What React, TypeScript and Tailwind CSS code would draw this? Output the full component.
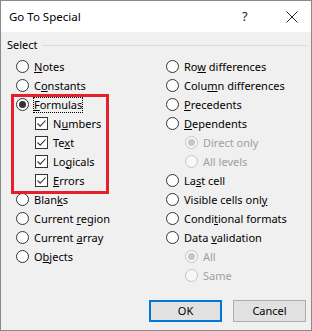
import React from "react";

type Item = {
  label: React.ReactNode;
  kind: "radio" | "check";
  checked?: boolean;
  disabled?: boolean;
  indent?: boolean;
  focus?: boolean;
};

function Radio({ checked, disabled }: { checked?: boolean; disabled?: boolean }) {
  return (
    <span
      className={`flex h-[13px] w-[13px] shrink-0 items-center justify-center rounded-full border ${
        disabled ? "border-[#c4c4c4] bg-[#f7f7f7]" : "border-[#333333] bg-white"
      }`}
    >
      {checked && (
        <span className={`h-[7px] w-[7px] rounded-full ${disabled ? "bg-[#c6c6c6]" : "bg-[#333333]"}`} />
      )}
    </span>
  );
}

function Check({ checked }: { checked?: boolean }) {
  return (
    <span className="flex h-[13px] w-[13px] shrink-0 items-center justify-center border border-[#333333] bg-white">
      {checked && (
        <svg width="11" height="11" viewBox="0 0 11 11">
          <path d="M1.5 5.5 L4.2 8.2 L9.5 2.5" fill="none" stroke="#333333" strokeWidth="1.1" />
        </svg>
      )}
    </span>
  );
}

function Row({ item }: { item: Item }) {
  return (
    <div className={`flex h-[19px] items-center ${item.indent ? "pl-[19px]" : ""}`}>
      {item.kind === "radio" ? <Radio checked={item.checked} disabled={item.disabled} /> : <Check checked={item.checked} />}
      <span
        className={`ml-[4px] leading-[14px] ${item.disabled ? "text-[#a0a0a0]" : "text-black"} ${
          item.focus ? "border border-dotted border-black px-[0px]" : "px-[1px]"
        }`}
      >
        {item.label}
      </span>
    </div>
  );
}

const left: Item[] = [
  { kind: "radio", label: <><u>N</u>otes</> },
  { kind: "radio", label: <>C<u>o</u>nstants</> },
  { kind: "radio", checked: true, focus: true, label: <><u>F</u>ormulas</> },
  { kind: "check", checked: true, indent: true, label: <>N<u>u</u>mbers</> },
  { kind: "check", checked: true, indent: true, label: <>Te<u>x</u>t</> },
  { kind: "check", checked: true, indent: true, label: <>Lo<u>g</u>icals</> },
  { kind: "check", checked: true, indent: true, label: <><u>E</u>rrors</> },
  { kind: "radio", label: <>Blan<u>k</u>s</> },
  { kind: "radio", label: <>Current <u>r</u>egion</> },
  { kind: "radio", label: <>Current <u>a</u>rray</> },
  { kind: "radio", label: <>O<u>b</u>jects</> },
];

const right: Item[] = [
  { kind: "radio", label: <>Ro<u>w</u> differences</> },
  { kind: "radio", label: <>Colu<u>m</u>n differences</> },
  { kind: "radio", label: <><u>P</u>recedents</> },
  { kind: "radio", label: <><u>D</u>ependents</> },
  { kind: "radio", disabled: true, checked: true, indent: true, label: "Direct only" },
  { kind: "radio", disabled: true, indent: true, label: "All levels" },
  { kind: "radio", label: <>La<u>s</u>t cell</> },
  { kind: "radio", label: <>Visible cells onl<u>y</u></> },
  { kind: "radio", label: <>Condi<u>t</u>ional formats</> },
  { kind: "radio", label: <>Data <u>v</u>alidation</> },
  { kind: "radio", disabled: true, checked: true, indent: true, label: "All" },
  { kind: "radio", disabled: true, indent: true, label: "Same" },
];

export default function App() {
  return (
    <div className="relative flex h-[331px] w-[312px] flex-col border border-[#8a8a8a] bg-[#f0f0f0] font-['Noto_Sans',sans-serif] text-[11px] text-black">
      {/* title bar */}
      <div className="flex h-[31px] items-center bg-white pl-[8px]">
        <span className="flex-1 text-[11.5px]">Go To Special</span>
        <span className="w-[12px] text-[13px] leading-none text-[#222]">?</span>
        <span className="ml-[31px] mr-[12px] flex w-[14px] justify-center">
          <svg width="12" height="12" viewBox="0 0 12 12">
            <path d="M0.5 0.5 L11.5 11.5 M11.5 0.5 L0.5 11.5" stroke="#222" strokeWidth="1" />
          </svg>
        </span>
      </div>

      {/* group header */}
      <div className="mt-[6px] flex h-[14px] items-center pl-[6px] pr-[4px]">
        <span className="leading-[14px]">Select</span>
        <span className="ml-[4px] h-px flex-1 bg-[#dcdcdc]" />
      </div>

      <div className="mt-[5px] flex">
        <div className="w-[150px] pl-[15px]">
          {left.map((it, i) => (
            <Row key={i} item={it} />
          ))}
        </div>
        <div className="pl-[15px]">
          {right.map((it, i) => (
            <Row key={i} item={it} />
          ))}
        </div>
      </div>

      {/* buttons */}
      <div className="mt-[15px] flex justify-end gap-[11px] pr-[5px]">
        <button className="h-[22px] w-[73px] border-2 border-[#0078d7] bg-[#e1e1e1]">OK</button>
        <button className="h-[22px] w-[73px] border border-[#adadad] bg-[#e1e1e1]">Cancel</button>
      </div>

      {/* red annotation box */}
      <div className="absolute left-[10px] top-[93px] h-[100px] w-[98px] border-[3px] border-[#e3202c]" />
    </div>
  );
}
